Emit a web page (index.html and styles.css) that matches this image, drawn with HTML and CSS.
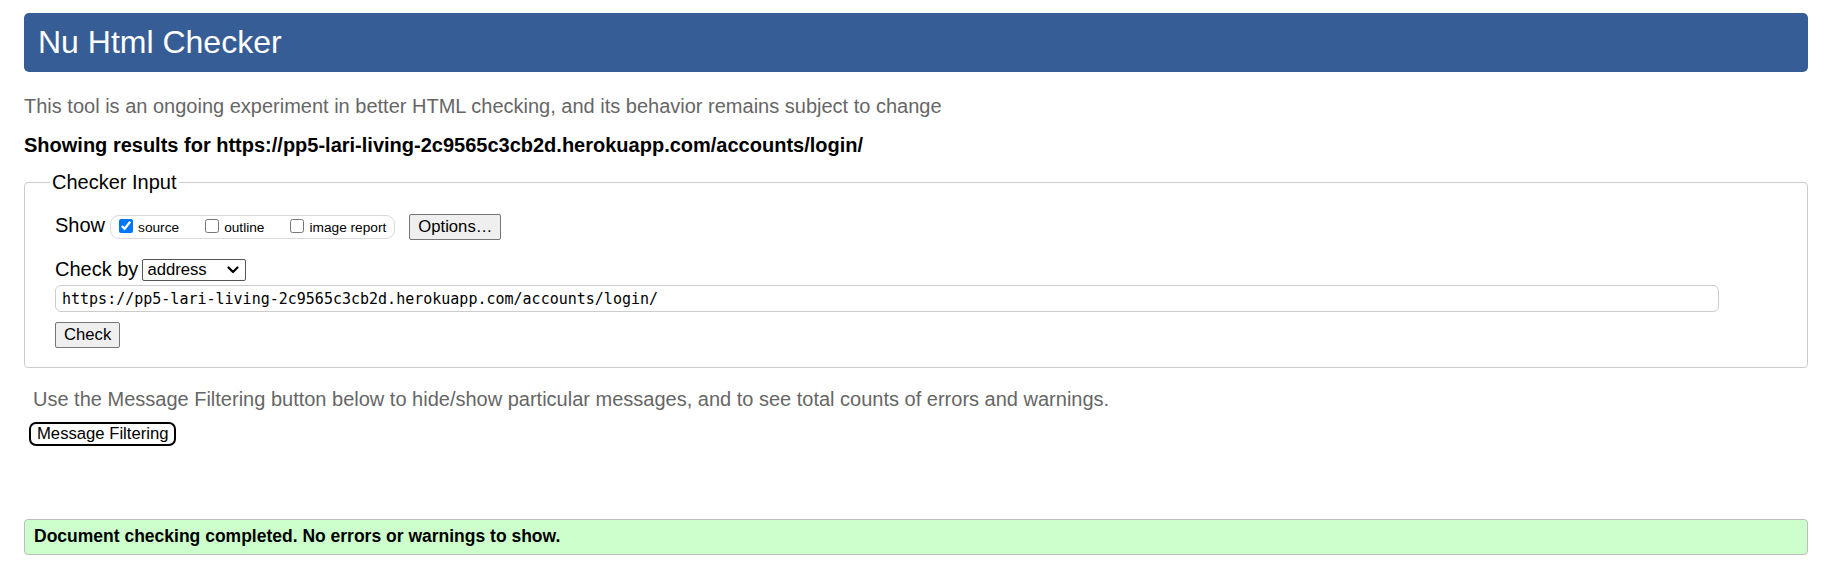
FILE: index.html
```html
<!DOCTYPE html>
<html lang="en">
<head>
<meta charset="utf-8">
<title>Nu Html Checker</title>
<link rel="stylesheet" href="styles.css">
</head>
<body>
<h1 class="title">Nu Html Checker</h1>
<p class="intro">This tool is an ongoing experiment in better HTML checking, and its behavior remains subject to change</p>
<p class="results">Showing results for https://pp5-lari-living-2c9565c3cb2d.herokuapp.com/accounts/login/</p>
<form class="checker">
  <fieldset class="inputs">
    <legend class="legend">Checker Input</legend>
    <div class="row row-show">
      <span class="label label-show">Show</span>
      <span class="group">
        <label class="opt"><input class="cb" type="checkbox" checked><span>source</span></label>
        <label class="opt"><input class="cb" type="checkbox"><span>outline</span></label>
        <label class="opt"><input class="cb" type="checkbox"><span>image report</span></label>
      </span>
      <button type="button" class="btn btn-options">Options…</button>
    </div>
    <div class="row row-by">
      <label class="label label-by" for="docselect">Check by</label>
      <span class="select-wrap">
        <select id="docselect" class="select"><option>address</option></select>
        <svg class="chev" width="12" height="8" viewBox="0 0 12 8" aria-hidden="true"><path d="M1.5 1.5 L6 6 L10.5 1.5" fill="none" stroke="#000" stroke-width="2.2" stroke-linecap="round" stroke-linejoin="round"/></svg>
      </span>
    </div>
    <input class="url" type="url" value="https://pp5-lari-living-2c9565c3cb2d.herokuapp.com/accounts/login/">
    <div class="row-submit"><button type="button" class="btn">Check</button></div>
  </fieldset>
</form>
<p class="hint">Use the Message Filtering button below to hide/show particular messages, and to see total counts of errors and warnings.</p>
<button type="button" class="filter-btn">Message Filtering</button>
<div class="success"><p class="success-text">Document checking completed. No errors or warnings to show.</p></div>
</body>
</html>
```

FILE: styles.css
```css
html, body {
  margin: 0;
}
body {
  padding: 13px 19px 0 24px;
  font-family: "Liberation Sans", Arial, sans-serif;
  color: #000;
  background: #fff;
}
.title {
  margin: 0;
  height: 59px;
  line-height: 59px;
  padding: 0 14px;
  background: #365d95;
  color: #fff;
  font-size: 32px;
  font-weight: normal;
  border-radius: 5px;
}
.intro {
  margin: 23px 0 0;
  font-size: 20px;
  line-height: 23px;
  color: #666;
}
.results {
  margin: 16px 0 0;
  font-size: 20px;
  line-height: 23px;
  font-weight: bold;
}
.checker {
  margin: 14px 0 0;
}
.inputs {
  margin: 0;
  padding: 20px 30px 19px;
  border: 1px solid #ccc;
  border-radius: 4px;
  min-width: 0;
}
.legend {
  margin-left: -5px;
  padding: 0 2px;
  font-size: 20px;
  line-height: 23px;
}
.row {
  display: flex;
  align-items: center;
}
.row-show {
  height: 26px;
}
.label {
  font-size: 20px;
  line-height: 23px;
}
.label-show {
  margin: 0 5px 4px 0;
}
.label-by {
  margin-right: 4px;
}
.group {
  display: inline-flex;
  align-items: center;
  gap: 26px;
  box-sizing: border-box;
  height: 23.5px;
  padding: 0 8px;
  border: 1px solid #d9d9d9;
  border-radius: 9px;
  font-size: 13.7px;
}
.opt {
  display: inline-flex;
  align-items: center;
  gap: 5px;
}
.cb {
  width: 14px;
  height: 14px;
  margin: 0 0 2px;
  accent-color: #0075ff;
}
.btn {
  font-family: "Liberation Sans", Arial, sans-serif;
  font-size: 16.67px;
  padding: 2px 8px;
  border: 1px solid #767676;
  border-radius: 2px;
  background: #efefef;
  color: #000;
}
.btn-options {
  margin-left: 14px;
}
.row-by {
  margin-top: 18px;
  height: 23px;
}
.select-wrap {
  position: relative;
  display: inline-block;
  height: 22px;
}
.select {
  appearance: none;
  -webkit-appearance: none;
  box-sizing: border-box;
  width: 104px;
  height: 22px;
  padding: 0 0 0 4px;
  font-family: "Liberation Sans", Arial, sans-serif;
  font-size: 16.67px;
  border: 1px solid #555;
  border-radius: 2px;
  background: #fff;
  color: #000;
}
.chev {
  position: absolute;
  right: 7px;
  top: 7px;
  pointer-events: none;
}
.url {
  display: block;
  box-sizing: border-box;
  width: calc(100% - 58px);
  height: 27px;
  margin: 4px 0 0;
  padding: 0 6px;
  border: 1px solid #ccc;
  border-radius: 6px;
  font-family: "DejaVu Sans Mono", "Liberation Mono", monospace;
  font-size: 15px;
  color: #000;
}
.row-submit {
  margin-top: 10px;
}
.hint {
  margin: 20px 0 0 9px;
  font-size: 20px;
  line-height: 23px;
  color: #666;
}
.filter-btn {
  display: block;
  margin: 11px 0 0 5px;
  padding: 0 6px;
  border: 2px solid #000;
  border-radius: 7px;
  background: #fff;
  color: #000;
  font-family: "Liberation Sans", Arial, sans-serif;
  font-size: 16.67px;
  line-height: 20px;
}
.success {
  margin-top: 73px;
  padding: 6px 9px 8px;
  background: #ccffcc;
  border: 1px solid #bdbdbd;
  border-radius: 4px;
}
.success-text {
  margin: 0;
  font-size: 17.5px;
  line-height: 20px;
  font-weight: bold;
}
```
